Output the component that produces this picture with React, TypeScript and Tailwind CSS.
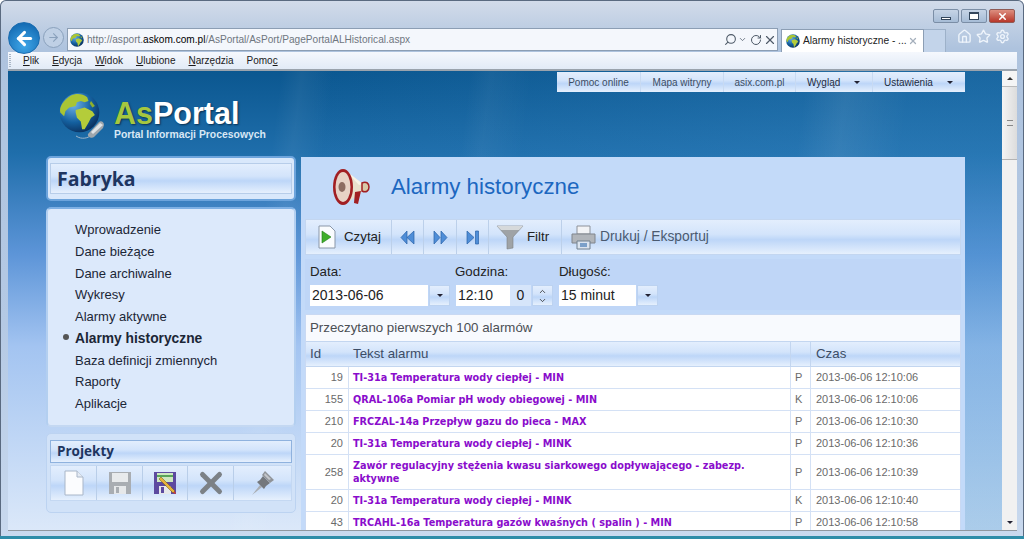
import { ChevronDown, ChevronUp, RotateCw, Search, X, Home, Star, Settings, ArrowLeft, ArrowRight } from 'lucide-react';

const alarms = [
  { id: 19, text: 'TI-31a Temperatura wody ciepłej - MIN', flag: 'P', time: '2013-06-06 12:10:06', h: 'h-[22px]' },
  { id: 155, text: 'QRAL-106a Pomiar pH wody obiegowej - MIN', flag: 'K', time: '2013-06-06 12:10:06', h: 'h-[22px]' },
  { id: 210, text: 'FRCZAL-14a Przepływ gazu do pieca - MAX', flag: 'P', time: '2013-06-06 12:10:30', h: 'h-[22px]' },
  { id: 20, text: 'TI-31a Temperatura wody ciepłej - MINK', flag: 'P', time: '2013-06-06 12:10:36', h: 'h-[22px]' },
  { id: 258, text: 'Zawór regulacyjny stężenia kwasu siarkowego dopływającego - zabezp. aktywne', flag: 'P', time: '2013-06-06 12:10:39', h: 'h-[35px]' },
  { id: 20, text: 'TI-31a Temperatura wody ciepłej - MINK', flag: 'K', time: '2013-06-06 12:10:40', h: 'h-[22px]' },
  { id: 43, text: 'TRCAHL-16a Temperatura gazów kwaśnych ( spalin ) - MIN', flag: 'P', time: '2013-06-06 12:10:58', h: 'h-[22px]' },
];

const menuItems = ['Wprowadzenie', 'Dane bieżące', 'Dane archiwalne', 'Wykresy', 'Alarmy aktywne', 'Alarmy historyczne', 'Baza definicji zmiennych', 'Raporty', 'Aplikacje'];

const gloss = 'bg-[linear-gradient(180deg,#e3eefd_0%,#d3e4fb_42%,#bdd6f8_58%,#e6f0fd_100%)]';

function Globe({ size }: { size: number }) {
  return (
    <svg width={size} height={size} viewBox="0 0 32 32" className="shrink-0">
      <defs>
        <radialGradient id="sea" cx="35%" cy="30%" r="75%">
          <stop offset="0%" stopColor="#6fb2e8" />
          <stop offset="60%" stopColor="#14609f" />
          <stop offset="100%" stopColor="#0b2f5c" />
        </radialGradient>
      </defs>
      <circle cx="16" cy="16" r="15.5" fill="url(#sea)" />
      <path d="M9 3c4-2 9-2 13 1l1 3-3 1-3-1-3 1-1 3-5 1-3 3-1 4-3-3c-1-4 2-9 8-13z" fill="#a9c534" />
      <path d="M13 14l7-2 6 3 2 3-3 2-2 4-3 5-2 0-1-6-3-3-1-4z" fill="#b4cc3a" />
      <path d="M25 7l3 4-2 1-2-3z" fill="#8fb02c" />
    </svg>
  );
}

function LogoMark() {
  return (
    <div className="relative h-[48px] w-[46px] shrink-0">
      <Globe size={41} />
      <svg width="30" height="24" viewBox="0 0 30 24" className="absolute bottom-0 right-0">
        <path d="M1 20c6 4 12 2 16-1" fill="none" stroke="#9db4c8" strokeWidth="1" />
        <path d="M13 18L24 6c2-2 5 0 5 3l-1 3-9 9c-2 2-7 0-6-3z" fill="#9ea6ad" />
        <path d="M16 16L25 7l3 2-10 9z" fill="#dfe3e6" />
      </svg>
    </div>
  );
}

function PageIcon() {
  return (
    <svg width="20" height="26" viewBox="0 0 20 26">
      <path d="M1 1h12l6 6v18H1z" fill="#fbfcfe" stroke="#a9b6c8" />
      <path d="M13 1v6h6" fill="#e5ebf4" stroke="#a9b6c8" />
    </svg>
  );
}

function DiskIcon({ edit }: { edit?: boolean }) {
  const body = edit ? '#5d4aa0' : '#a9adb2';
  return (
    <svg width="24" height="24" viewBox="0 0 24 24">
      <path d="M1 1h22v22H1z" fill={body} />
      <path d="M4 2h16v9H4z" fill={edit ? '#cfe8c0' : '#e8eaec'} />
      {edit && <path d="M4 4h16v2H4z" fill="#5aa55a" />}
      <path d="M6 15h12v8H6z" fill="#e6e8ea" />
      <path d="M8 16h3v6H8z" fill={body} />
      {edit && <path d="M6 8l2-2 14 14-2 2z" fill="#e6b43c" stroke="#6a4e14" strokeWidth=".5" />}
      {edit && <path d="M20 22l3 1-1-3z" fill="#d8402c" />}
    </svg>
  );
}

function PinIcon() {
  return (
    <svg width="24" height="26" viewBox="0 0 24 26">
      <path d="M1 25l8-10 2 2z" fill="#a9adb2" />
      <path d="M6 12l3-2 3-4 7 7-4 3-2 3z" fill="#74787d" />
      <path d="M11 5l3-4 9 9-4 3z" fill="#8f9398" />
      <path d="M14 3l6 6-2 1-5-5z" fill="#c3c6ca" />
    </svg>
  );
}

function Megaphone() {
  return (
    <svg width="42" height="42" viewBox="0 0 42 42">
      <path d="M12 3l20 14v7L15 37z" fill="#e8e0cc" />
      <path d="M14 3l18 14-4 1z" fill="#f7f3e6" />
      <ellipse cx="12" cy="20" rx="10" ry="18" fill="#a11f23" />
      <ellipse cx="12" cy="20" rx="7.500" ry="15" fill="#e8d3c6" />
      <ellipse cx="11" cy="20" rx="3.500" ry="5" fill="#8d6d62" />
      <path d="M31 16c4-2 7 0 7 4s-3 6-7 4z" fill="#d8c9a8" stroke="#a11f23" strokeWidth="1.500" />
      <path d="M24 25l6-1-3 13-4-1z" fill="#a11f23" />
    </svg>
  );
}

function SkipIcon({ kind }: { kind: 'back' | 'next' | 'end' }) {
  return (
    <svg width="15" height="15" viewBox="0 0 15 15">
      {kind === 'back' && <path d="M7 1v13L1 7.500zM14 1v13L7 7.500z" fill="#4f8ed8" stroke="#2a62a8" strokeWidth=".7" />}
      {kind === 'next' && <path d="M1 1v13l6-6.500zM8 1v13l6-6.500z" fill="#4f8ed8" stroke="#2a62a8" strokeWidth=".7" />}
      {kind === 'end' && <path d="M2 1v13l7-6.500zM10.500 1h3v13h-3z" fill="#4f8ed8" stroke="#2a62a8" strokeWidth=".7" />}
    </svg>
  );
}

function Arrow() {
  return <span className="inline-block border-x-[3px] border-t-[3px] border-x-transparent border-t-[#223]" />;
}

function Dropdown({ w, value }: { w: string; value: string }) {
  return (
    <div className={`flex h-[21px] ${w}`}>
      <div className="flex-1 bg-white pl-[2px] text-[14px] leading-[21px] text-[#222]">{value}</div>
      <div className={`ml-[1px] flex w-[21px] items-center justify-center border border-[#bcd2f0] ${gloss}`}><Arrow /></div>
    </div>
  );
}

function Browser() {
  return (
    <>
      <div className="flex h-[25px] shrink-0 items-start justify-end gap-[2px] pr-[9px] pt-[9px]">
        <div className="flex h-[14px] w-[26px] items-end justify-center rounded-[2px] border border-[#7b8ea6] bg-[linear-gradient(180deg,#c6d4e6,#a6bcd6)] pb-[2px]"><div className="h-[3px] w-[10px] border border-[#33465c] bg-white" /></div>
        <div className="flex h-[14px] w-[26px] items-center justify-center rounded-[2px] border border-[#7b8ea6] bg-[linear-gradient(180deg,#c6d4e6,#a6bcd6)]"><div className="h-[8px] w-[10px] border border-t-2 border-[#33465c] bg-white" /></div>
        <div className="flex h-[14px] w-[26px] items-center justify-center rounded-[2px] border border-[#8f5a55] bg-[linear-gradient(180deg,#dd8f80,#b8372a)]"><X size={11} strokeWidth={3.500} className="text-white" /></div>
      </div>
      <div className="flex h-[27px] shrink-0 items-start pl-[8px]">
        <div className="z-10 -mt-[3px] flex h-[32px] w-[32px] shrink-0 items-center justify-center rounded-full border border-[#1a6cb0] bg-[radial-gradient(circle_at_50%_75%,#3fa6e8,#0b5fa8)]">
          <ArrowLeft size={21} strokeWidth={3.500} className="text-white" />
        </div>
        <div className="ml-[3px] mt-[2px] flex h-[21px] w-[21px] shrink-0 items-center justify-center rounded-full border border-[#8aa1bc] bg-[#bfd0e5]">
          <ArrowRight size={13} className="text-[#8aa1bc]" />
        </div>
        <div className="ml-[3px] mt-[3px] flex h-[23px] w-[711px] shrink-0 items-center border border-[#8c9eb4] bg-[#f4f7fc] pl-[2px]">
          <Globe size={14} />
          <span className="ml-[3px] text-[10.100px] text-[#6f7680]">http://asport.<span className="text-black">askom.com.pl</span>/AsPortal/AsPort/PagePortalALHistorical.aspx</span>
          <div className="ml-auto flex items-center gap-[1px] text-[#4e5a68]">
            <Search size={13} className="-scale-x-100" />
            <ChevronDown size={9} />
            <RotateCw size={12} className="ml-[2px]" />
            <X size={14} />
          </div>
        </div>
        <div className="ml-[3px] mt-[4px] flex h-[23px] w-[143px] shrink-0 items-center border border-b-0 border-[#8c9eb4] bg-white pl-[4px]">
          <Globe size={14} />
          <span className="ml-[3px] whitespace-nowrap text-[10.200px] text-[#222]">Alarmy historyczne - ...</span>
          <X size={10} strokeWidth={3} className="ml-auto mr-[5px] text-[#a5b0bc]" />
        </div>
        <div className="mt-[4px] h-[23px] w-[22px] shrink-0 border border-b-0 border-l-0 border-[#9db1c9] bg-[#c3d4ea]" />
        <div className="ml-[11px] mt-[4px] flex items-center gap-[4px] text-[#eef4fb]">
          <Home size={15} strokeWidth={2.200} />
          <Star size={15} strokeWidth={2.200} />
          <Settings size={15} strokeWidth={2.200} />
        </div>
      </div>
      <div className="ml-[8px] mr-[7px] flex h-[19px] shrink-0 items-center border-b-2 border-[#9aa3ad] bg-[linear-gradient(180deg,#f5f8fd,#e2ebf7)] text-[10px] text-[#1a1a1a]">
        <div className="ml-[1px] mr-[12px] h-[13px] w-[2px] border-x border-dotted border-[#a9b6c6]" />
        <div className="flex gap-[13px]">
          <span><u>P</u>lik</span>
          <span><u>E</u>dycja</span>
          <span><u>W</u>idok</span>
          <span><u>U</u>lubione</span>
          <span><u>N</u>arzędzia</span>
          <span>Pomo<u>c</u></span>
        </div>
      </div>
    </>
  );
}

function TopLinks() {
  return (
    <div className={`mt-[1px] flex h-[20px] text-[10px] ${gloss}`}>
      <span className="flex w-[84px] items-center justify-center border-r border-[#c8daf2] text-[#3c4d63]">Pomoc online</span>
      <span className="flex w-[83px] items-center justify-center border-r border-[#c8daf2] text-[#3c4d63]">Mapa witryny</span>
      <span className="flex w-[72px] items-center justify-center border-r border-[#c8daf2] text-[#3c4d63]">asix.com.pl</span>
      <span className="flex w-[77px] items-center border-r border-[#c8daf2] pl-[11px] text-[#1d2b40]">Wygląd<span className="ml-auto mr-[12px] flex"><Arrow /></span></span>
      <span className="flex w-[92px] items-center pl-[11px] text-[#1d2b40]">Ustawienia<span className="ml-auto mr-[12px] flex"><Arrow /></span></span>
    </div>
  );
}

function Sidebar() {
  return (
    <div className="flex w-[250px] shrink-0 flex-col">
      <div className="flex h-[45px] items-center rounded-[5px] border-2 border-[#6da4dc] bg-[#d9e8fb] px-[2px] py-[5px]">
        <div className={`flex h-full w-full items-center border border-[#b7cde9] pl-[6px] text-[19.500px] font-bold text-[#1e3560] ${gloss}`} style={{ fontFamily: '"Open Sans", sans-serif' }}>Fabryka</div>
      </div>
      <div className="mt-[6px] h-[220px] rounded-[5px] border-2 border-[#7fb0e4] border-x-[#b3cff0] border-b-[#c4d8f2] bg-[#dce9fb] pt-[10px]">
        {menuItems.map((item) => {
          const active = item === 'Alarmy historyczne';
          return (
            <div key={item} className={`relative h-[21.750px] pl-[27px] leading-[21.750px] text-[#1b2636] ${active ? 'text-[13.800px] font-bold' : 'text-[13px]'}`}>
              {active && <span className="absolute left-[15px] top-[6px] h-[6px] w-[6px] rounded-full bg-[#555]" />}
              {item}
            </div>
          );
        })}
      </div>
      <div className="mt-[6px] h-[80px] rounded-[5px] border border-[#bcd3f1] bg-[#d1e2f8] px-[3px] pt-[6px]">
        <div className={`flex h-[23px] items-center border border-[#8fb2de] pl-[6px] text-[13.500px] font-bold text-[#1e3560] ${gloss}`} style={{ fontFamily: '"Open Sans", sans-serif' }}>Projekty</div>
        <div className={`mt-[2px] flex h-[36px] border border-[#c4d8f2] ${gloss}`}>
          <div className="flex w-[46px] items-center justify-center border-r border-[#b9cee9]"><PageIcon /></div>
          <div className="flex w-[46px] items-center justify-center border-r border-[#b9cee9]"><DiskIcon /></div>
          <div className="flex w-[45px] items-center justify-center border-r border-[#b9cee9]"><DiskIcon edit /></div>
          <div className="flex w-[46px] items-center justify-center border-r border-[#b9cee9]"><X size={34} strokeWidth={3.500} className="text-[#7c8186]" /></div>
          <div className="flex flex-1 items-center justify-center"><PinIcon /></div>
        </div>
      </div>
    </div>
  );
}

function Toolbar() {
  return (
    <div className={`flex h-[36px] items-stretch border border-[#c3d6f0] text-[13.300px] ${gloss}`}>
      <div className="flex w-[86px] items-center gap-[8px] border-r border-[#bcd0ea] pl-[12px] text-[#222]">
        <svg width="18" height="24" viewBox="0 0 18 24"><path d="M1 1h11l5 5v17H1z" fill="#fafcfe" stroke="#8a97a8" /><path d="M4 6v12l9-6z" fill="#3fae2a" stroke="#1f7a14" strokeWidth=".6" /></svg>
        Czytaj
      </div>
      <div className="flex w-[32px] items-center justify-center border-r border-[#bcd0ea]"><SkipIcon kind="back" /></div>
      <div className="flex w-[33px] items-center justify-center border-r border-[#bcd0ea]"><SkipIcon kind="next" /></div>
      <div className="flex w-[32px] items-center justify-center border-r border-[#bcd0ea]"><SkipIcon kind="end" /></div>
      <div className="flex w-[73px] items-center gap-[3px] border-r border-[#bcd0ea] pl-[7px] text-[#222]">
        <svg width="28" height="25" viewBox="0 0 28 25"><path d="M1 1h26L17 12v11l-6 1V12z" fill="#9fa3a6" stroke="#7d8285" strokeWidth=".6" /><path d="M1 1h26l-4 4H5z" fill="#d6d9db" /></svg>
        Filtr
      </div>
      <div className="flex items-center gap-[4px] pl-[9px] text-[13.800px] text-[#4a5a70]">
        <svg width="25" height="25" viewBox="0 0 25 25"><path d="M6 1h13v8H6z" fill="#f2f3f5" stroke="#8d929a" /><path d="M1 9h23v9H1z" fill="#b1b5ba" stroke="#80858c" /><path d="M6 16h13v8H6z" fill="#dbe4ef" stroke="#70808f" /><path d="M9 18h7v4H9z" fill="#7ba0c9" /></svg>
        Drukuj / Eksportuj
      </div>
    </div>
  );
}

function FormRow() {
  return (
    <div className="mt-[4px] flex h-[51px] gap-[6px] bg-[#bfd6f7] pl-[5px] pt-[4px] text-[13.300px] text-[#222]">
      <div className="flex w-[140px] flex-col gap-[4px]">
        <span className="h-[18px] leading-[18px]">Data:</span>
        <Dropdown w="w-[140px]" value="2013-06-06" />
      </div>
      <div className="flex w-[97px] flex-col gap-[4px]">
        <span className="-ml-[1px] h-[18px] leading-[18px]">Godzina:</span>
        <div className="flex h-[21px] text-[14px]">
          <div className="w-[54px] bg-white pl-[2px] leading-[21px]">12:10</div>
          <div className="w-[21px] bg-[#d6e5fa] text-center leading-[21px]">0</div>
          <div className={`ml-[1px] flex w-[21px] flex-col items-center justify-center border border-[#bcd2f0] ${gloss}`}>
            <ChevronUp size={9} />
            <ChevronDown size={9} />
          </div>
        </div>
      </div>
      <div className="flex w-[99px] flex-col gap-[4px]">
        <span className="h-[18px] leading-[18px]">Długość:</span>
        <Dropdown w="w-[99px]" value="15 minut" />
      </div>
    </div>
  );
}

function AlarmTable() {
  return (
    <div className="mt-[4px] border border-[#c9d9f3] bg-[#f8fafe]">
      <div className="flex h-[26px] items-center pl-[4px] text-[13.300px] text-[#4b4f55]">Przeczytano pierwszych 100 alarmów</div>
      <div className={`flex h-[26px] border-y border-[#c3d6f0] text-[13.300px] text-[#3c4d66] ${gloss}`}>
        <div className="flex w-[43px] items-center pl-[4px]">Id</div>
        <div className="flex w-[441px] items-center pl-[4px]">Tekst alarmu</div>
        <div className="w-[21px] border-x border-[#c3d6f0]" />
        <div className="flex flex-1 items-center pl-[5px]">Czas</div>
      </div>
      {alarms.map((row, i) => (
        <div key={i} className={`flex border-b border-[#d4e1f5] bg-white text-[11px] text-[#6a6a6a] ${row.h}`}>
          <div className="flex w-[43px] items-center justify-end border-r border-[#d4e1f5] pr-[5px]">{row.id}</div>
          <div className="flex w-[441px] items-center pl-[4px] pr-[40px] text-[9.700px] font-bold leading-[13px] text-[#8a0ccc]" style={{ fontFamily: '"DejaVu Sans", sans-serif' }}>{row.text}</div>
          <div className="flex w-[21px] items-center border-x border-[#d4e1f5] pl-[4px]">{row.flag}</div>
          <div className="flex flex-1 items-center pl-[5px]">{row.time}</div>
        </div>
      ))}
    </div>
  );
}

function Scrollbar() {
  return (
    <div className="flex w-[15px] shrink-0 flex-col bg-[#f1f1f1]">
      <div className="flex h-[16px] items-center justify-center border-b border-[#bbb] bg-[#f5f5f5]"><span className="inline-block border-x-[3px] border-b-[3px] border-x-transparent border-b-[#333]" /></div>
      <div className="flex h-[73px] items-center justify-center border-b border-[#b4b4b4] bg-[linear-gradient(90deg,#f4f4f4,#dcdcdc)]">
        <div className="h-[6px] w-[6px] border-y border-[#888]" />
      </div>
      <div className="flex-1" />
      <div className="flex h-[16px] items-center justify-center"><Arrow /></div>
    </div>
  );
}

export default function App() {
  return (
    <div className="flex h-[539px] w-[1024px] flex-col overflow-hidden rounded-t-[6px] bg-[linear-gradient(180deg,#d3dcea_0%,#aec3de_9%,#b4c9e4_60%,#c9d9ee_100%)] shadow-[inset_0_0_0_1px_#5a6a80]" style={{ fontFamily: '"Liberation Sans", Arial, sans-serif' }}>
      <Browser />
      <div className="ml-[8px] mr-[7px] flex h-[460px] shrink-0 overflow-hidden border-b border-[#8f979f]">
        <div className="flex-1 overflow-hidden bg-[linear-gradient(97deg,transparent_26%,rgba(255,255,255,0.05)_28%,transparent_31%,transparent_44%,rgba(255,255,255,0.04)_46%,transparent_50%,transparent_76%,rgba(255,255,255,0.07)_80%,transparent_86%),linear-gradient(90deg,rgba(40,120,190,0)_30%,rgba(60,140,200,0.3)_90%),linear-gradient(180deg,#0b5790_0%,#1f6eab_18%,#5d95d8_40%,#a3c4f1_60%,#dbe8f9_100%)] pr-[37px]">
          <div className="flex justify-end"><TopLinks /></div>
          <div className="flex h-[64px] items-start pl-[51px]">
            <LogoMark />
            <div className="ml-[9px] mt-[6px]">
              <div className="text-[30.500px] font-bold leading-[30px] text-white [text-shadow:1px_1px_2px_#0a3050]"><span className="text-[#a5c73f]">As</span>Portal</div>
              <div className="text-[10.400px] font-bold leading-[14px] text-[#d8e7f5]">Portal Informacji Procesowych</div>
            </div>
          </div>
          <div className="flex gap-[5px] pl-[38px]">
            <Sidebar />
            <div className="mt-[1px] flex h-[400px] flex-1 flex-col bg-[#c3daf9] px-[4px]">
              <div className="flex h-[62px] shrink-0 items-center gap-[18px] pl-[26px]">
                <Megaphone />
                <span className="-mt-[2px] text-[22.300px] leading-none text-[#1c67c0]">Alarmy historyczne</span>
              </div>
              <Toolbar />
              <FormRow />
              <AlarmTable />
            </div>
          </div>
        </div>
        <Scrollbar />
      </div>
      <div className="mt-auto h-[3px] shrink-0 bg-[#2e8ca8]" />
    </div>
  );
}
